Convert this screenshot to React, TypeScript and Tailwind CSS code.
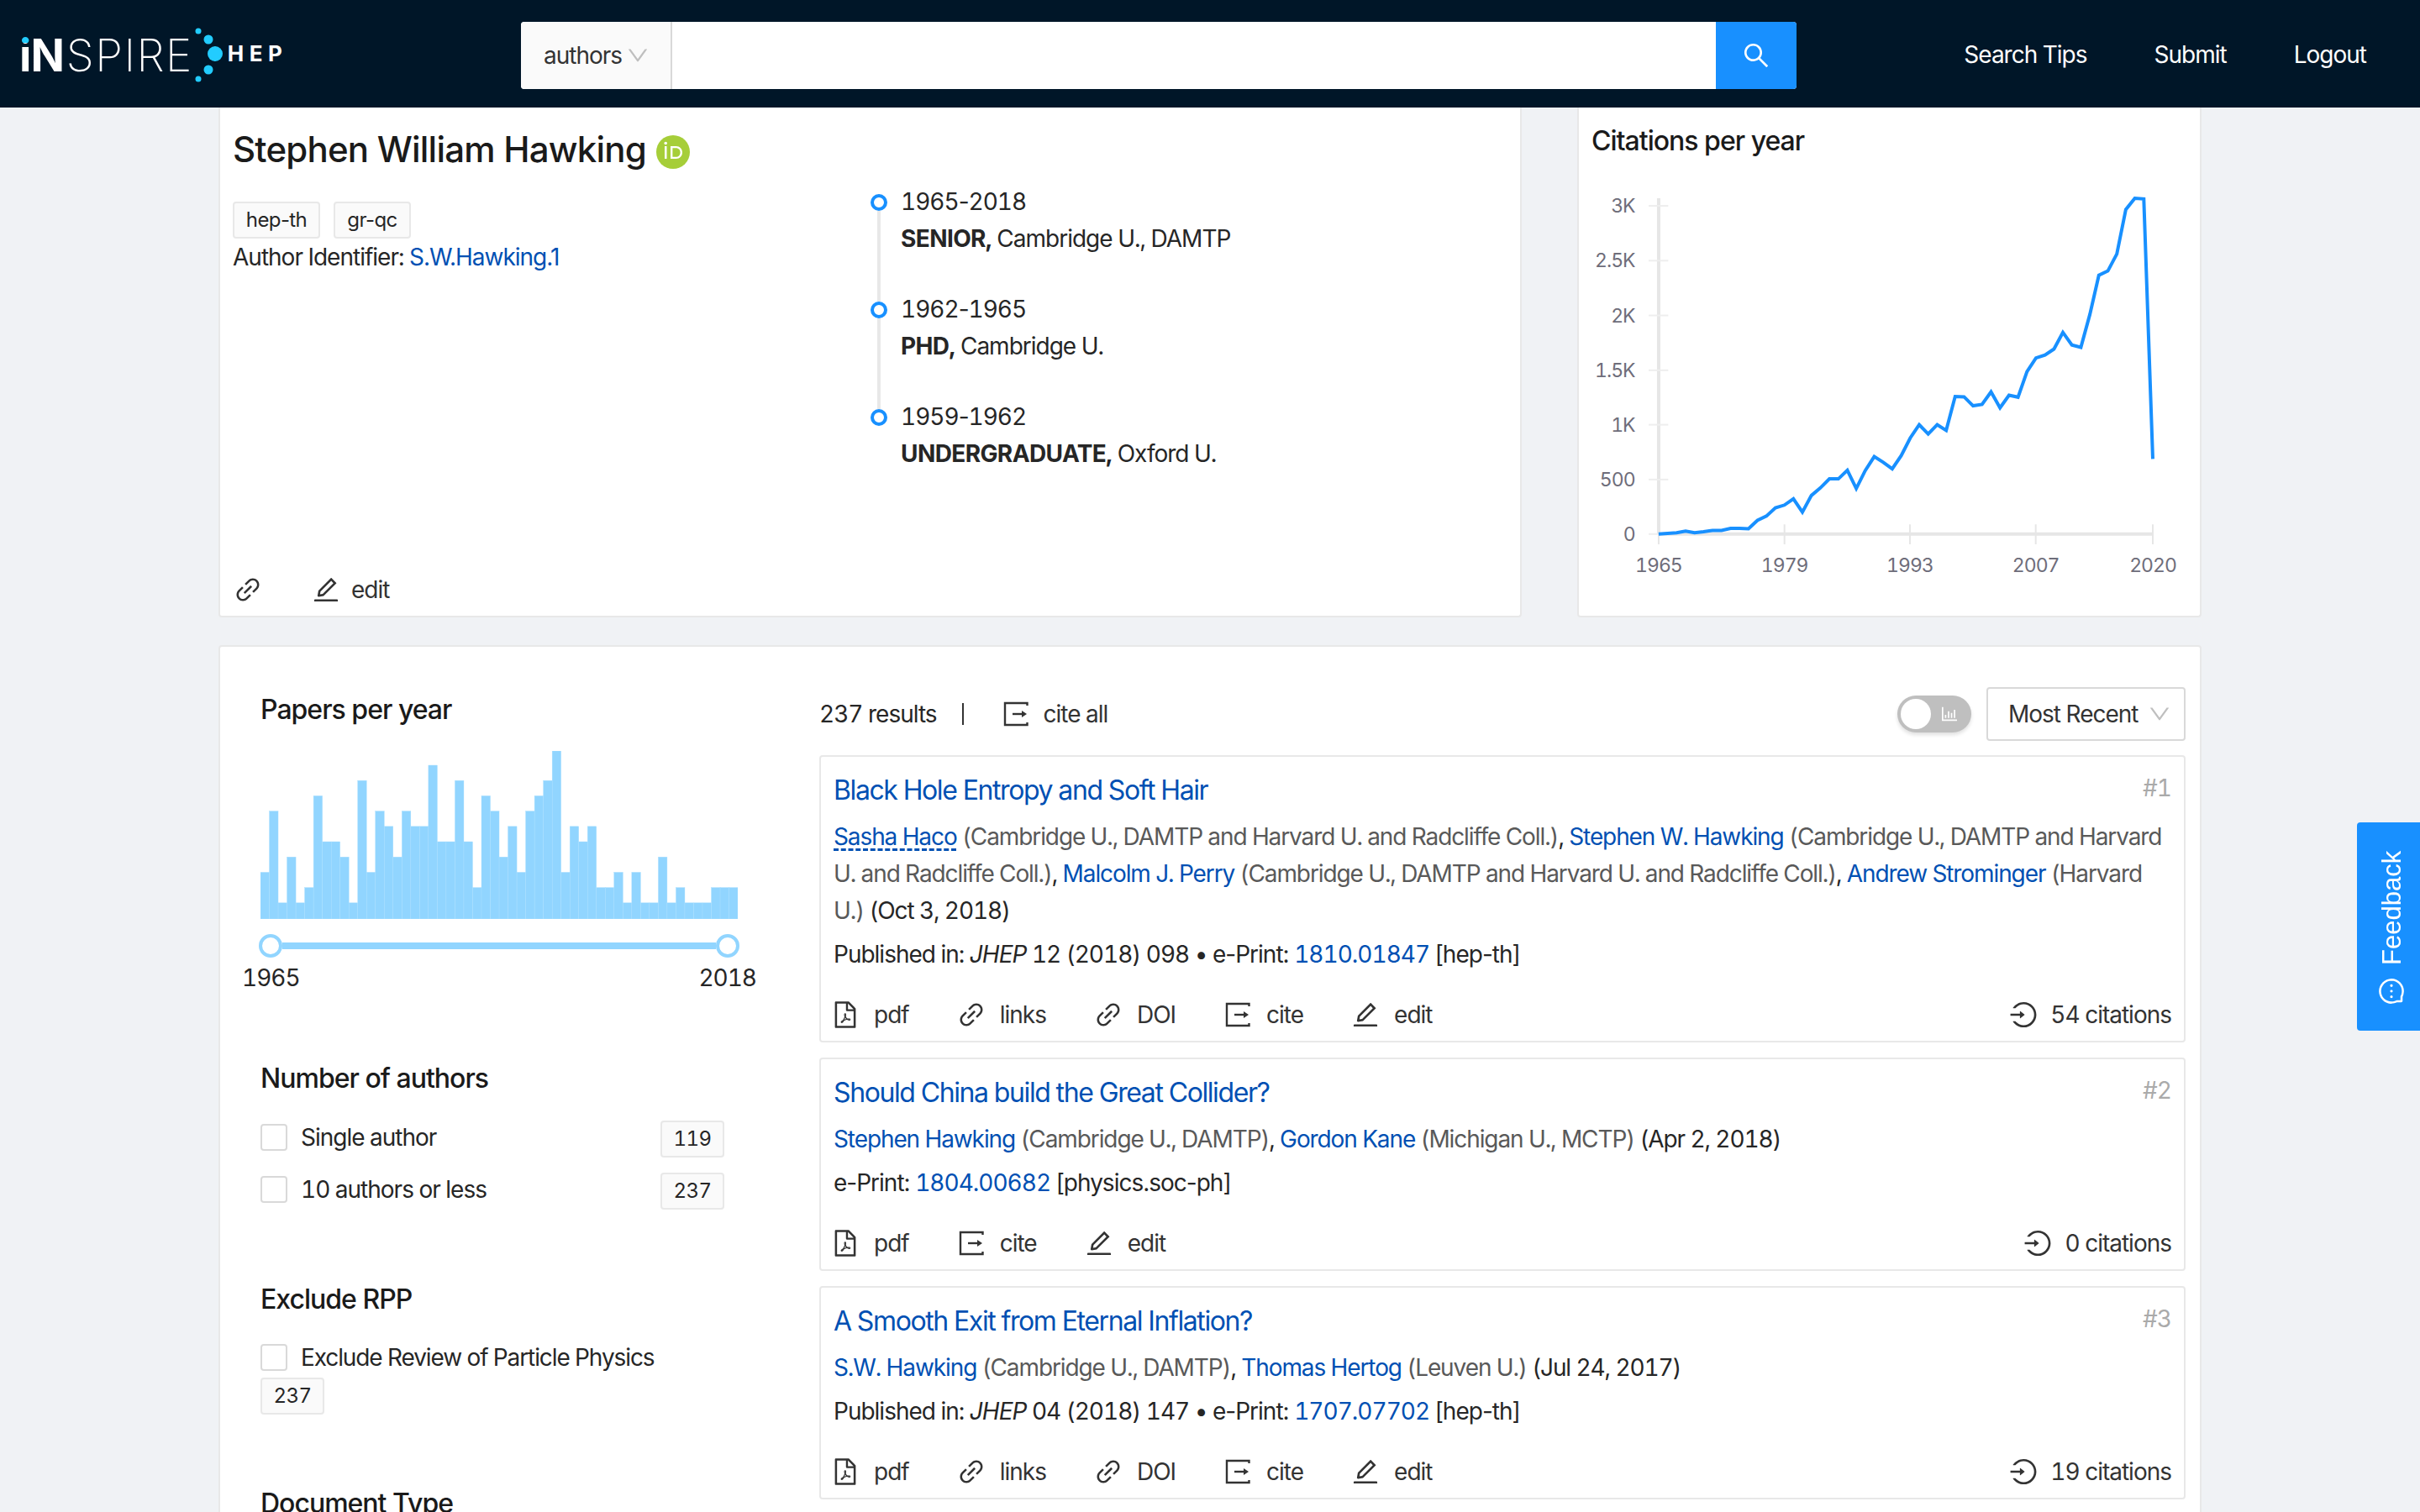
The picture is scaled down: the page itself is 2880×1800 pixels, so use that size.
import React from 'react';
import {
  AiOutlineBarChart,
  AiOutlineDown,
  AiOutlineEdit,
  AiOutlineFilePdf,
  AiOutlineLink,
  AiOutlineLogin,
  AiOutlineMessage,
  AiOutlineSearch,
} from 'react-icons/ai';

const PAPERS = [3, 7, 1, 4, 1, 2, 8, 5, 5, 4, 1, 9, 3, 7, 6, 4, 7, 6, 6, 10, 5, 5, 9, 5, 2, 8, 7, 4, 6, 3, 7, 8, 9, 11, 3, 6, 5, 6, 2, 2, 3, 1, 3, 1, 1, 4, 1, 2, 1, 1, 1, 2, 2, 2];

const CITATIONS = [1279, 1277, 1275, 1270, 1275, 1272, 1268, 1268, 1262, 1262, 1263, 1238, 1225, 1200, 1192, 1173, 1213, 1163, 1140, 1113, 1113, 1087, 1142, 1088, 1046, 1063, 1083, 1043, 990, 950, 978, 950, 967, 865, 866, 893, 889, 851, 899, 861, 867, 790, 749, 740, 722, 672, 710, 717, 618, 500, 487, 436, 302, 268, 270, 1053];

// the cite icon: open box with a small arrow, not in the icon packs in this shape
const CiteIcon = () => (
  <svg width="36" height="36" viewBox="0 0 36 36" fill="none" stroke="currentColor" strokeWidth="2.4">
    <path d="M31.500 8V5H5v26h26.500v-3" />
    <path d="M14 18h13" />
    <path d="M25 14l6 4-6 4z" fill="currentColor" stroke="none" />
  </svg>
);

const Logo = () => (
  <div className="-mt-1 flex h-[120px] w-[620px] shrink-0 items-center pl-[23px] text-white">
    <span className="text-[53px] font-bold leading-none tracking-[-1px]">
      <span className="bg-[linear-gradient(#22ccff_27%,#ffffff_27%)] bg-clip-text text-transparent">i</span>N
    </span>
    <span className="ml-[3px] text-[53px] font-extralight leading-none tracking-[1.5px]">SPIRE</span>
    <svg width="40" height="70" viewBox="0 0 40 70" className="-mt-1 shrink-0 fill-[#22ccff]">
      <circle cx="6" cy="8" r="3.5" />
      <circle cx="18" cy="18" r="5.5" />
      <circle cx="26" cy="35" r="9" />
      <circle cx="18" cy="54" r="5.5" />
      <circle cx="6" cy="65" r="3.5" />
    </svg>
    <span className="-mt-1 ml-[1px] text-[26px] font-bold leading-none tracking-[6.5px]">HEP</span>
  </div>
);

const Header = () => (
  <header className="flex h-[128px] items-center bg-[#001628] pt-2">
    <Logo />
    <div className="-mt-1 flex h-20 w-[1518px] shrink-0 overflow-hidden rounded-[4px] bg-white">
      <div className="flex w-[180px] items-center gap-[4px] border-r-2 border-[#d9d9d9] bg-[#fafafa] pl-[27px] text-[#333]">
        authors
        <AiOutlineDown className="text-[30px] text-[#bfbfbf]" />
      </div>
      <div className="flex-1" />
      <div className="flex w-[96px] items-center justify-center bg-[#1890ff]">
        <AiOutlineSearch className="text-[36px] text-white" />
      </div>
    </div>
    <nav className="-mt-[6px] flex flex-1 justify-end gap-[80px] pr-[64px] text-white">
      <span>Search Tips</span>
      <span>Submit</span>
      <span>Logout</span>
    </nav>
  </header>
);

const Tag = ({ children, className = '' }: { children: React.ReactNode; className?: string }) => (
  <span className={`flex h-[44px] items-center justify-center rounded-[4px] border-2 border-[#e8e8e8] bg-[#fafafa] text-[24px] tracking-[-0.6px] ${className}`}>
    {children}
  </span>
);

// tabular figures in Inter widen hyphens too, so words with one opt out
const Plain = ({ children }: { children: React.ReactNode }) => <span className="normal-nums">{children}</span>;

const Action = ({ icon, label }: { icon: React.ReactNode; label: string }) => (
  <span className="flex items-center gap-[16px] text-[#333]">
    <span className="flex w-9 justify-center text-[36px]">{icon}</span>
    {label}
  </span>
);

const POSITIONS = [
  { from: '1965', to: '2018', rank: 'SENIOR,', place: 'Cambridge U., DAMTP' },
  { from: '1962', to: '1965', rank: 'PHD,', place: 'Cambridge U.' },
  { from: '1959', to: '1962', rank: 'UNDERGRADUATE,', place: 'Oxford U.' },
];

const AuthorCard = () => (
  <section className="flex h-[607px] w-[1551px] flex-col rounded-b-[4px] border-x-2 border-b-2 border-[#e8e8e8] bg-white pl-[15px]">
    <div className="flex flex-1">
      <div className="w-[758px] shrink-0 pt-[22px]">
        <div className="flex h-[56px] items-center">
          <h1 className="text-[42px] font-medium leading-[56px] tracking-[-0.8px] text-[#1a1a1a]">Stephen William Hawking</h1>
          <svg width="40" height="40" viewBox="0 0 40 40" className="ml-[12px] mt-[6px] shrink-0">
            <circle cx="20" cy="20" r="20" fill="#a6ce39" />
            <rect x="10" y="13" width="2.5" height="15" fill="#fff" />
            <circle cx="11.2" cy="9.5" r="1.8" fill="#fff" />
            <path d="M17 13h6.5c4.5 0 7.5 3.2 7.5 7.500S28 28 23.500 28H17zm2.400 2.200v10.600h4c3.300 0 5.200-2.400 5.200-5.300s-1.900-5.300-5.200-5.300z" fill="#fff" />
          </svg>
        </div>
        <div className="mt-[34px] flex gap-4">
          <Tag className="w-[104px] normal-nums">hep-th</Tag>
          <Tag className="w-[92px] normal-nums">gr-qc</Tag>
        </div>
        <p>
          Author Identifier: <a className="normal-nums text-[#0050b3]">S.W.Hawking.1</a>
        </p>
      </div>
      <div className="pl-[1px] pt-[90px]">
        {POSITIONS.map((p, i) => (
          <div key={p.from} className="flex h-[128px]">
            <div className="flex w-5 flex-col items-center pt-[13px]">
              <span className="h-5 w-5 shrink-0 rounded-full border-[4px] border-[#1890ff] bg-white" />
              {i < POSITIONS.length - 1 && <span className="-mb-[13px] w-1 flex-1 bg-[#e8e8e8]" />}
            </div>
            <div className="ml-4">
              <div>
                {p.from}
                <Plain>-</Plain>
                {p.to}
              </div>
              <div>
                <strong className="font-bold tracking-[-0.6px]">{p.rank}</strong> {p.place}
              </div>
            </div>
          </div>
        ))}
      </div>
    </div>
    <div className="flex items-center gap-[57px] pb-[9px] text-[#333]">
      <AiOutlineLink className="text-[36px]" />
      <span className="flex items-center gap-[12px]">
        <AiOutlineEdit className="text-[36px]" />
        edit
      </span>
    </div>
  </section>
);

const CitationsCard = () => {
  const px = (d: number) => d / 2.01 - 17;
  const py = (d: number) => d / 2.529 - 70;
  const line = CITATIONS.map((d, i) => `${px(229 + i * 21.49).toFixed(1)},${py(d).toFixed(1)}`).join(' ');
  const yTicks = [
    ['3K', 291],
    ['2.5K', 456],
    ['2K', 621],
    ['1.5K', 786],
    ['1K', 950],
    ['500', 1115],
    ['0', 1279],
  ] as const;
  const xTicks = [
    ['1965', 229],
    ['1979', 530],
    ['1993', 830],
    ['2007', 1131],
    ['2020', 1411],
  ] as const;
  return (
    <section className="h-[607px] w-[743px] rounded-b-[4px] border-x-2 border-b-2 border-[#e8e8e8] bg-white">
      <h2 className="flex h-[72px] items-center pl-[15px] pt-[8px] text-[32px] font-medium tracking-[-1px] text-[#1a1a1a]">Citations per year</h2>
      <svg width="739" height="530" className="-ml-[2px] block tabular-nums tracking-[-1px]">
        <line x1={px(229)} x2={px(229)} y1={py(268)} y2={py(1279)} stroke="#e6e6e6" strokeWidth="4" />
        <line x1={px(229)} x2={px(1411)} y1={py(1279)} y2={py(1279)} stroke="#e6e6e6" strokeWidth="4" />
        {yTicks.map(([label, d]) => (
          <g key={label}>
            <line x1={px(205)} x2={px(252)} y1={py(d)} y2={py(d)} stroke="#eeeeee" strokeWidth="2" />
            <text x={px(172)} y={py(d) + 8} textAnchor="end" fontSize="23" fill="#6e6d7a">{label}</text>
          </g>
        ))}
        {xTicks.map(([label, d]) => (
          <g key={label}>
            <line x1={px(d)} x2={px(d)} y1={py(1250)} y2={py(1310)} stroke="#e6e6e6" strokeWidth="2" />
            <text x={px(d)} y={py(1372) + 8} textAnchor="middle" fontSize="23" fill="#6e6d7a">{label}</text>
          </g>
        ))}
        <polyline points={line} fill="none" stroke="#1890ff" strokeWidth="4" strokeLinejoin="miter" />
      </svg>
    </section>
  );
};

const Histogram = () => (
  <svg width="568" height="200" className="mt-[27px] block">
    {PAPERS.map((n, i) => {
      const h = n === 11 ? 200 : n * 18.2 + 1;
      return <rect key={i} x={i * 10.52} y={200 - h} width="10.52" height={h} fill="#91d5ff" stroke="#a9deff" strokeWidth="0.4" />;
    })}
  </svg>
);

const Slider = () => (
  <>
    <div className="mt-[18px] -ml-[2px] flex w-[572px] items-center">
      <span className="h-7 w-7 shrink-0 rounded-full border-[4px] border-[#91d5ff] bg-white" />
      <span className="h-2 flex-1 bg-[#91d5ff]" />
      <span className="h-7 w-7 shrink-0 rounded-full border-[4px] border-[#91d5ff] bg-white" />
    </div>
    <div className="-ml-[22px] mt-[2px] flex w-[612px] justify-between">
      <span>1965</span>
      <span>2018</span>
    </div>
  </>
);

const FilterTitle = ({ children, className = '' }: { children: React.ReactNode; className?: string }) => (
  <h3 className={`text-[32px] font-medium leading-[44px] tracking-[-1px] text-[#1a1a1a] ${className}`}>{children}</h3>
);

const Checkbox = () => <span className="h-8 w-8 shrink-0 rounded-[4px] border-2 border-[#d9d9d9] bg-white" />;

const Sidebar = () => (
  <aside className="w-[713px] shrink-0 pl-[48px] pt-[53px]">
    <FilterTitle>Papers per year</FilterTitle>
    <Histogram />
    <Slider />
    <FilterTitle className="mt-[76px]">Number of authors</FilterTitle>
    <div className="mt-[28px] flex w-[552px] items-center justify-between">
      <label className="-mt-1 flex items-center gap-4">
        <Checkbox />
        Single author
      </label>
      <Tag className="w-[76px]">119</Tag>
    </div>
    <div className="mt-[18px] flex w-[552px] items-center justify-between">
      <label className="-mt-1 flex items-center gap-4">
        <Checkbox />
        10 authors or less
      </label>
      <Tag className="w-[76px]">237</Tag>
    </div>
    <FilterTitle className="mt-[85px]">Exclude RPP</FilterTitle>
    <label className="mt-[25px] flex items-center gap-4 tracking-[-1.1px]">
      <Checkbox />
      Exclude Review of Particle Physics
    </label>
    <Tag className="mt-[2px] w-[76px]">237</Tag>
    <FilterTitle className="mt-[84px]">Document Type</FilterTitle>
  </aside>
);

const Toolbar = () => (
  <div className="flex h-[64px] items-center">
    <span>237 results</span>
    <span className="ml-[30px] h-[26px] w-[2px] bg-[#333]" />
    <span className="ml-[44px] flex items-center gap-[15px] text-[#333]">
      <CiteIcon />
      cite all
    </span>
    <span className="ml-auto flex h-[44px] w-[88px] items-center justify-between rounded-full bg-[#bfbfbf] pl-1 pr-[14px] shadow-[0_3px_4px_rgba(0,0,0,0.12)]">
      <span className="h-9 w-9 rounded-full bg-white" />
      <AiOutlineBarChart className="text-[24px] text-white" />
    </span>
    <span className="ml-[18px] flex h-[64px] w-[237px] items-center justify-between rounded-[4px] border-2 border-[#d9d9d9] bg-white pl-6 pr-[14px] text-[#333]">
      Most Recent
      <AiOutlineDown className="text-[30px] text-[#bfbfbf]" />
    </span>
  </div>
);

const A = ({ children, className = '' }: { children: React.ReactNode; className?: string }) => (
  <a className={`text-[#0050b3] ${className}`}>{children}</a>
);

const Aff = ({ children }: { children: React.ReactNode }) => <span className="text-[#595959]">{children}</span>;

const ACTION_ICONS: Record<string, React.ReactNode> = {
  pdf: <AiOutlineFilePdf />,
  links: <AiOutlineLink />,
  DOI: <AiOutlineLink />,
  cite: <CiteIcon />,
  edit: <AiOutlineEdit />,
};

const ResultCard = ({
  n,
  title,
  actions,
  citations,
  authors,
  meta,
}: {
  n: number;
  title: string;
  actions: string[];
  citations: string;
  authors: React.ReactNode;
  meta: React.ReactNode;
}) => (
  <article className="rounded-[4px] border-2 border-[#e8e8e8] bg-white pb-[9px] pl-[15px] pr-[15px] pt-[18px]">
    <div className="flex h-[44px] items-center justify-between">
      <h4 className="text-[32px] leading-[44px] tracking-[-1.4px] text-[#0050b3]">{title}</h4>
      <span className="-mt-[6px] text-[#aaaaaa]">#{n}</span>
    </div>
    <div className="mt-[11px] tracking-[-1.1px]">{authors}</div>
    <div className="mb-[28px] mt-[8px]">{meta}</div>
    <div className="flex h-[44px] items-center justify-between">
      <div className="-ml-[4px] flex gap-[56px]">
        {actions.map((a) => (
          <Action key={a} icon={ACTION_ICONS[a]} label={a} />
        ))}
      </div>
      <span className="flex items-center gap-[14px] text-[#333]">
        <AiOutlineLogin className="text-[36px]" />
        {citations}
      </span>
    </div>
  </article>
);

const Results = () => (
  <div className="flex w-[1626px] flex-col gap-[18px] pt-[48px]">
    <div className="-mb-[1px]">
      <Toolbar />
    </div>
    <ResultCard
      n={1}
      title="Black Hole Entropy and Soft Hair"
      actions={['pdf', 'links', 'DOI', 'cite', 'edit']}
      citations="54 citations"
      authors={
        <>
          <A className="underline decoration-dashed underline-offset-4">Sasha Haco</A> <Aff>(Cambridge U., DAMTP and Harvard U. and Radcliffe Coll.)</Aff>, <A>Stephen W. Hawking</A>{' '}
          <Aff>(Cambridge U., DAMTP and Harvard U. and Radcliffe Coll.)</Aff>, <A>Malcolm J. Perry</A> <Aff>(Cambridge U., DAMTP and Harvard U. and Radcliffe Coll.)</Aff>, <A>Andrew Strominger</A>{' '}
          <Aff>(Harvard U.)</Aff> (Oct 3, 2018)
        </>
      }
      meta={
        <>
          Published in: <em>JHEP</em> 12 (2018) 098 • <Plain>e-Print:</Plain> <A>1810.01847</A> <Plain>[hep-th]</Plain>
        </>
      }
    />
    <ResultCard
      n={2}
      title="Should China build the Great Collider?"
      actions={['pdf', 'cite', 'edit']}
      citations="0 citations"
      authors={
        <>
          <A>Stephen Hawking</A> <Aff>(Cambridge U., DAMTP)</Aff>, <A>Gordon Kane</A> <Aff>(Michigan U., MCTP)</Aff> (Apr 2, 2018)
        </>
      }
      meta={
        <>
          <Plain>e-Print:</Plain> <A>1804.00682</A> <Plain>[physics.soc-ph]</Plain>
        </>
      }
    />
    <ResultCard
      n={3}
      title="A Smooth Exit from Eternal Inflation?"
      actions={['pdf', 'links', 'DOI', 'cite', 'edit']}
      citations="19 citations"
      authors={
        <>
          <A>S.W. Hawking</A> <Aff>(Cambridge U., DAMTP)</Aff>, <A>Thomas Hertog</A> <Aff>(Leuven U.)</Aff> (Jul 24, 2017)
        </>
      }
      meta={
        <>
          Published in: <em>JHEP</em> 04 (2018) 147 • <Plain>e-Print:</Plain> <A>1707.07702</A> <Plain>[hep-th]</Plain>
        </>
      }
    />
  </div>
);

const FeedbackTab = () => (
  <div className="fixed right-0 top-[979px] flex h-[248px] w-[75px] rotate-180 items-center justify-center gap-[14px] rounded-br-[4px] rounded-tr-[4px] bg-[#1890ff] pb-[4px] pr-[8px] text-white [writing-mode:vertical-rl]">
    <AiOutlineMessage className="rotate-90 text-[34px]" />
    <span className="font-['Liberation_Sans'] text-[31px] leading-none tracking-normal">Feedback</span>
  </div>
);

export default function App() {
  return (
    <div className="h-screen overflow-hidden bg-[#f0f2f5] font-['Inter',sans-serif] text-[28px] leading-[44px] tracking-[-1px] text-[#262626] tabular-nums">
      <Header />
      <main className="mx-auto w-[2360px]">
        <div className="flex gap-[66px]">
          <AuthorCard />
          <CitationsCard />
        </div>
        <section className="mt-[33px] flex rounded-[4px] border-2 border-[#e8e8e8] bg-white">
          <Sidebar />
          <Results />
        </section>
      </main>
      <FeedbackTab />
    </div>
  );
}
